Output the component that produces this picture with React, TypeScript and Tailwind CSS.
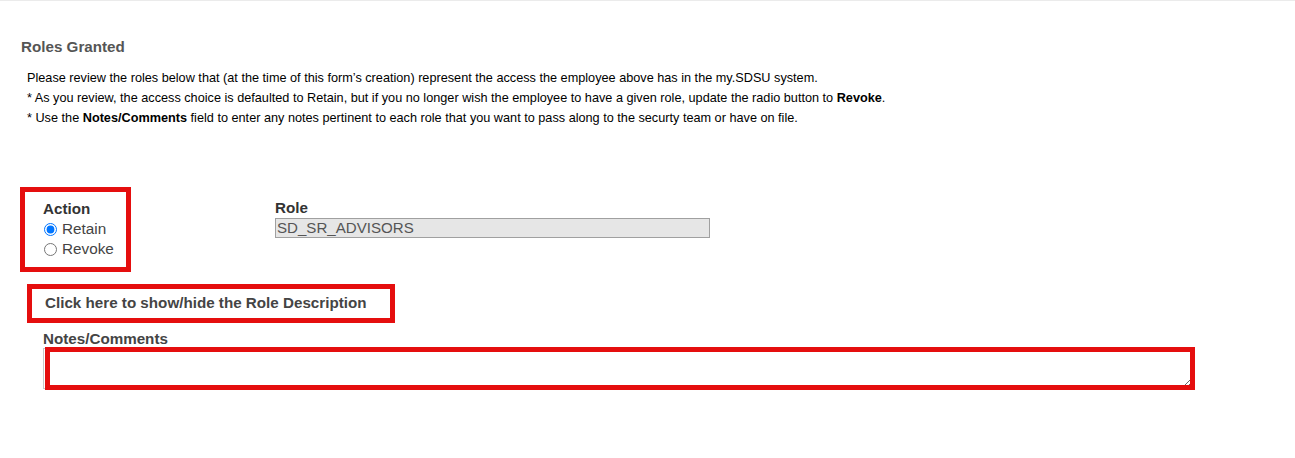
import React from "react";

export default function App() {
  return (
    <div className="w-[1295px] h-[458px] bg-white border-t border-[#ebebeb] overflow-hidden" style={{ fontFamily: '"Liberation Sans", Arial, sans-serif' }}>
      <h2 className="mt-[36px] pl-[21px] text-[15.2px] leading-[20px] font-bold text-[#555555]">Roles Granted</h2>
      <div className="mt-[11px] pl-[27px] text-[12.7px] leading-[20px] text-black">
        <p>Please review the roles below that (at the time of this form’s creation) represent the access the employee above has in the my.SDSU system.</p>
        <p>* As you review, the access choice is defaulted to Retain, but if you no longer wish the employee to have a given role, update the radio button to <b>Revoke</b>.</p>
        <p>* Use the <b>Notes/Comments</b> field to enter any notes pertinent to each role that you want to pass along to the securty team or have on file.</p>
      </div>

      <div className="mt-[59px] flex items-start">
        <div className="ml-[20px] w-[111px] h-[85px] border-[5px] border-[#e50e0e] pt-[7px] pl-[18px]">
          <div className="text-[15.2px] leading-[20px] font-bold text-[#333333]">Action</div>
          <label className="flex items-center h-[20px] text-[15.3px] text-[#444444]">
            <input type="radio" name="action" defaultChecked className="m-0 ml-[1px] w-[13px] h-[13px]" />
            <span className="ml-[5px]">Retain</span>
          </label>
          <label className="flex items-center h-[20px] text-[15.3px] text-[#444444]">
            <input type="radio" name="action" className="m-0 ml-[1px] w-[13px] h-[13px]" />
            <span className="ml-[5px]">Revoke</span>
          </label>
        </div>
        <div className="ml-[144px] mt-[11px]">
          <div className="text-[15.2px] leading-[20px] font-bold text-[#333333]">Role</div>
          <input
            readOnly
            value="SD_SR_ADVISORS"
            className="block w-[435px] h-[20px] bg-[#e6e6e6] border border-[#a0a0a0] px-[1px] text-[15.1px] text-[#555555] outline-none"
          />
        </div>
      </div>

      <div className="mt-[12px] ml-[27px] w-[368px] h-[39px] border-[5px] border-[#e50e0e] pl-[13px] flex items-center">
        <span className="text-[15.2px] font-bold text-[#444444]">Click here to show/hide the Role Description</span>
      </div>

      <div className="mt-[6px] ml-[43px] text-[15.2px] leading-[19px] font-bold text-[#444444]">Notes/Comments</div>
      <div className="relative ml-[43px] w-[1149px] h-[41px]">
        <textarea className="block w-[1149px] h-[41px] border border-[#c8c8c8] bg-white outline-none" />
        <div className="absolute left-[2px] top-[-1px] w-[1150px] h-[43px] border-[5px] border-[#e50e0e] pointer-events-none" />
      </div>
    </div>
  );
}
